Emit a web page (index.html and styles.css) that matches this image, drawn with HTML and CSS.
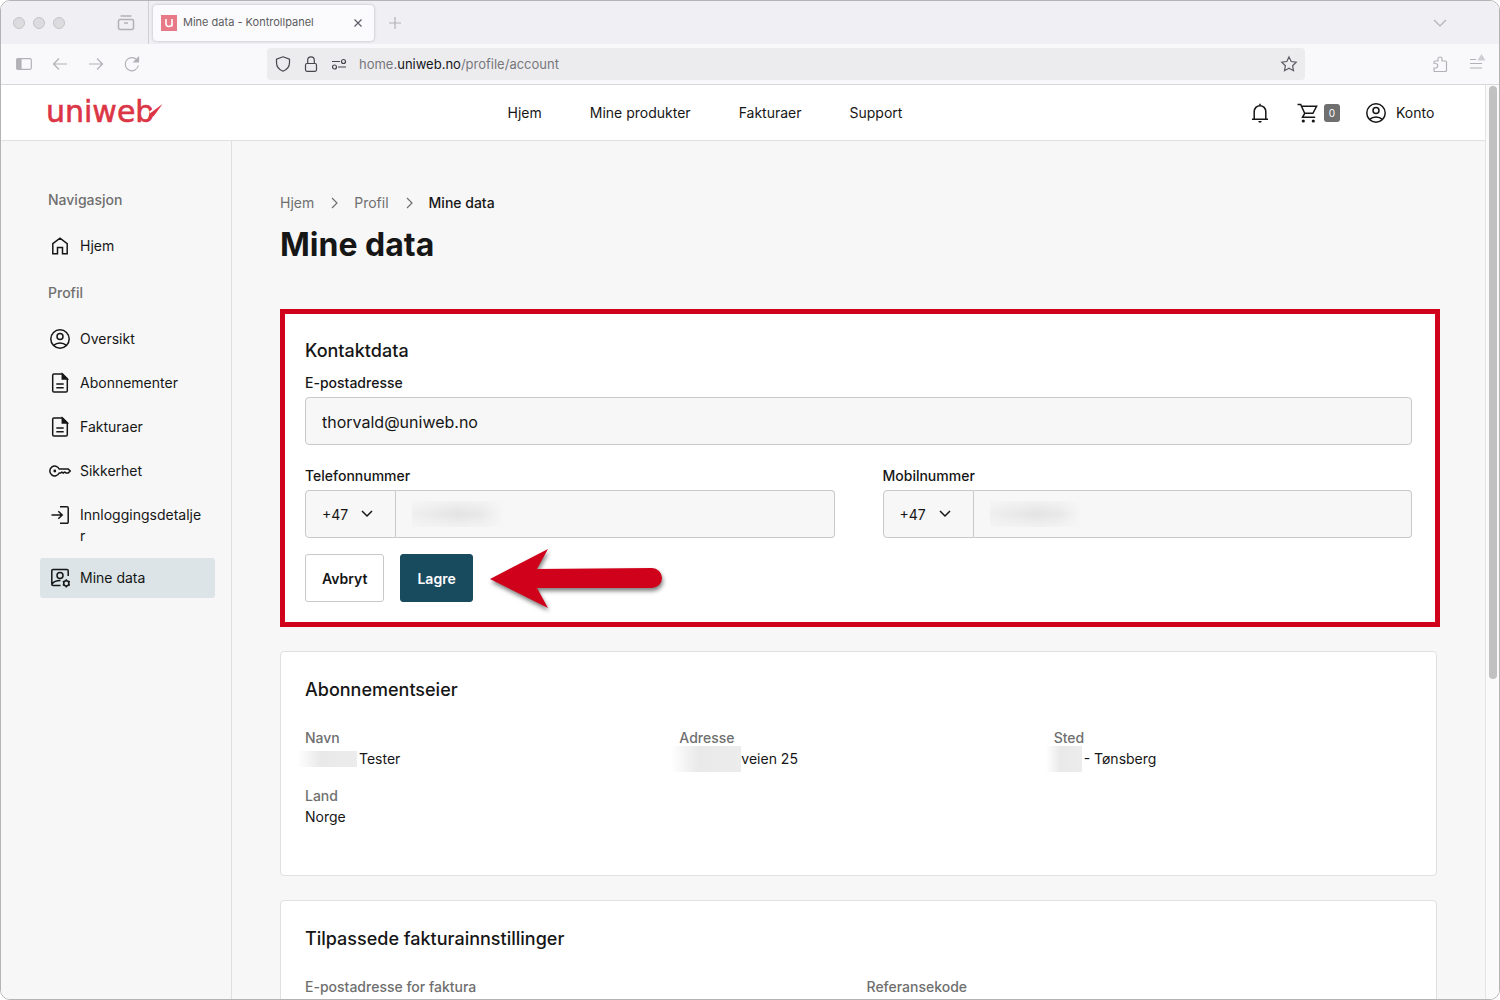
FILE: index.html
```
<!DOCTYPE html>
<html lang="no">
<head>
<meta charset="UTF-8">
<meta name="viewport" content="width=device-width, initial-scale=1.0">
<title>Mine data - Kontrollpanel</title>
<link rel="stylesheet" href="styles.css">
</head>
<body>

<!-- shared icons -->
<svg class="sprite" aria-hidden="true">
    <symbol id="i-user" viewBox="0 0 24 24">
        <circle cx="12" cy="12" r="9.2"/>
        <circle cx="12" cy="9.5" r="3"/>
        <path d="M5.6 18.4c1.7-1.5 3.9-2.4 6.4-2.4s4.7.9 6.4 2.4"/>
    </symbol>
    <symbol id="i-doc" viewBox="0 0 24 24">
        <path d="M14.5 3H6a1.3 1.3 0 0 0-1.3 1.3v15.4A1.3 1.3 0 0 0 6 21h12a1.3 1.3 0 0 0 1.3-1.3V7.8z"/>
        <path d="M14.3 3v5h5z" fill="currentColor"/>
        <path d="M8.3 13h7.4M8.3 16.7h7.4"/>
    </symbol>
    <symbol id="i-right" viewBox="0 0 16 16">
        <path d="M6 3l5 5-5 5"/>
    </symbol>
</svg>

<div class="window">

    <div class="tabstrip">
        <div class="lights"><span></span><span></span><span></span></div>
        <button class="chrome-btn" aria-label="Nylige">
            <svg class="icon chrome-icon" viewBox="0 0 18 18"><path d="M3.5 2h11M1.5 7a1.5 1.5 0 0 1 1.5-1.5h12A1.5 1.5 0 0 1 16.5 7v7a1.5 1.5 0 0 1-1.5 1.5H3A1.5 1.5 0 0 1 1.5 14zM7 9h4"/></svg>
        </button>
        <div class="tab">
            <svg class="favicon" viewBox="0 0 16 16"><rect width="16" height="16" fill="#e77a86"/><path d="M5 4v4.5a3 3 0 0 0 6 0V4M11 4v7.5" fill="none" stroke="#fff" stroke-width="1.6"/></svg>
            <span class="tab-title">Mine data - Kontrollpanel</span>
            <button class="chrome-btn dark" aria-label="Lukk fane">
                <svg class="icon close-icon" viewBox="0 0 10 10"><path d="M1.5 1.5l7 7M8.5 1.5l-7 7"/></svg>
            </button>
        </div>
        <button class="chrome-btn" aria-label="Ny fane">
            <svg class="icon plus-icon" viewBox="0 0 12 12"><path d="M6 0v12M0 6h12"/></svg>
        </button>
        <button class="chrome-btn tab-list" aria-label="Vis faner">
            <svg class="icon plus-icon" viewBox="0 0 12 12"><path d="M0 3l6 6 6-6"/></svg>
        </button>
    </div>

    <div class="toolbar">
        <div class="toolbar-left">
            <button class="chrome-btn" aria-label="Sidepanel">
                <svg class="icon tool-icon" viewBox="0 0 16 16"><rect x=".7" y="2.7" width="14.6" height="10.6" rx="1.5"/><path d="M1 3h4v10H1z" fill="currentColor"/></svg>
            </button>
            <button class="chrome-btn" aria-label="Tilbake">
                <svg class="icon tool-icon" viewBox="0 0 16 16"><path d="M15 8H1.5M7 2.5L1.5 8 7 13.5"/></svg>
            </button>
            <button class="chrome-btn" aria-label="Frem">
                <svg class="icon tool-icon" viewBox="0 0 16 16"><path d="M1 8h13.5M9 2.5L14.5 8 9 13.5"/></svg>
            </button>
            <button class="chrome-btn" aria-label="Last inn">
                <svg class="icon tool-icon" viewBox="0 0 16 16"><path d="M14.3 9.5A6.6 6.6 0 1 1 12.5 3.5"/><path d="M14.5 1.5v4.5H10z" fill="currentColor"/></svg>
            </button>
        </div>
        <div class="urlbar">
            <svg class="icon tool-icon" viewBox="0 0 16 16"><path d="M8 .8l6.5 2.4v3.3c0 4-2.6 7.200-6.5 8.700-3.900-1.500-6.500-4.700-6.500-8.700V3.200z"/></svg>
            <svg class="icon tool-icon" viewBox="0 0 16 16"><rect x="2.5" y="7.5" width="11" height="7.8" rx="1.5"/><path d="M4.7 7.500V4.200a3.300 3.300 0 0 1 6.600 0v3.300"/></svg>
            <svg class="icon tool-icon" viewBox="0 0 16 16"><path d="M1 5.5h8M7 11h8"/><circle cx="12.5" cy="5.5" r="2"/><circle cx="3.5" cy="11" r="2"/></svg>
            <span class="url">home.<b>uniweb.no</b>/profile/account</span>
            <button class="chrome-btn dark" aria-label="Bokmerk">
                <svg class="icon tool-icon" viewBox="0 0 16 16"><path d="M8 .9l2.2 4.6 5 .7-3.6 3.5.9 5L8 12.3l-4.500 2.400.9-5L.8 6.200l5-.7z"/></svg>
            </button>
        </div>
        <div class="toolbar-right">
            <button class="chrome-btn" aria-label="Utvidelser">
                <svg class="icon tool-icon" viewBox="0 0 16 16"><path d="M1 7.300V6a1 1 0 0 1 1-1h3V3a2 2 0 0 1 4 0v2h3.500a1 1 0 0 1 1 1V14.500a1 1 0 0 1-1 1H2a1 1 0 0 1-1-1V12h1.500a1.800 1.800 0 0 0 0-4.500z"/></svg>
            </button>
            <button class="chrome-btn" aria-label="Meny">
                <svg class="icon tool-icon" viewBox="0 0 16 16"><path d="M1 3.500h6M1 7.500h12M1 12h12"/><path d="M12.500-2l4 6.500h-8z" fill="#cfcfd3" stroke="none"/></svg>
            </button>
        </div>
    </div>

    <div class="viewport">
    <div class="page">

        <header class="header">
            <a href="#" class="logo" aria-label="uniweb">
                <svg viewBox="0 0 114 26">
                    <text x="-2" y="22">uniweb</text>
                    <path d="M103 14l14-11" stroke="#fff" stroke-width="6"/>
                    <path d="M100.500 18c0-3 1.300-5 3.700-6.300L114.500 4l-7 9.800c-1.500 2.700-3.700 4.200-7 4.200z" fill="#dc3545"/>
                </svg>
            </a>
            <nav class="topnav">
                <a href="#">Hjem</a>
                <a href="#">Mine produkter</a>
                <a href="#">Fakturaer</a>
                <a href="#">Support</a>
            </nav>
            <div class="account">
                <a href="#" aria-label="Varsler">
                    <svg class="icon" viewBox="0 0 24 24"><path d="M4 18.200h16M6.200 18V10.500a5.800 5.800 0 0 1 11.600 0V18M12 4.500V2.700"/><path d="M10.300 20h3.400a1.700 1.700 0 0 1-3.400 0z" fill="currentColor" stroke="none"/></svg>
                </a>
                <a href="#" class="cart" aria-label="Handlekurv">
                    <svg class="icon" viewBox="0 0 24 24"><path d="M1.500 3.500h3.200l4 8.800h8.200l3.700-7H5.500M8.700 12.300L6.500 16.300h12.700"/><circle cx="7.300" cy="20" r="1.600" fill="currentColor" stroke="none"/><circle cx="17.300" cy="20" r="1.600" fill="currentColor" stroke="none"/></svg>
                    <span class="badge">0</span>
                </a>
                <a href="#" class="konto">
                    <svg class="icon"><use href="#i-user"/></svg>
                    Konto
                </a>
            </div>
        </header>

        <div class="content">
            <aside class="sidebar">
                <h2>Navigasjon</h2>
                <ul>
                    <li><a href="#">
                        <svg class="icon" viewBox="0 0 24 24"><path d="M4.800 9.700L12 4.200l7.200 5.500v10h-4.700V13.500h-5v6.200H4.800z"/></svg>
                        <span>Hjem</span></a></li>
                </ul>
                <h2>Profil</h2>
                <ul>
                    <li><a href="#"><svg class="icon"><use href="#i-user"/></svg><span>Oversikt</span></a></li>
                    <li><a href="#"><svg class="icon"><use href="#i-doc"/></svg><span>Abonnementer</span></a></li>
                    <li><a href="#"><svg class="icon"><use href="#i-doc"/></svg><span>Fakturaer</span></a></li>
                    <li><a href="#">
                        <svg class="icon" viewBox="0 0 24 24"><path d="M11.200 10a4.900 4.900 0 1 0 0 4h1.300l1.300-.9 1.400.9 1.500-.9 1.500.9h2l2-2-2-2z"/><circle cx="6.800" cy="12" r="1.400" fill="currentColor" stroke="none"/></svg>
                        <span>Sikkerhet</span></a></li>
                    <li><a href="#">
                        <svg class="icon" viewBox="0 0 24 24"><path d="M12 3.700h7a1.200 1.200 0 0 1 1.200 1.200v14.200a1.200 1.200 0 0 1-1.200 1.200h-7M3.500 12h10.500M10.300 8.200l3.900 3.800-3.900 3.800"/></svg>
                        <span>Innloggingsdetaljer</span></a></li>
                    <li><a href="#" class="active">
                        <svg class="icon" viewBox="0 0 24 24"><path d="M20.200 10V4.800a1.300 1.300 0 0 0-1.300-1.300H5.100a1.300 1.300 0 0 0-1.300 1.300v13.400a1.300 1.300 0 0 0 1.300 1.300h7.400M4 18c1.800-2.300 4.700-3.500 8.500-3.400"/><circle cx="12" cy="9.500" r="3"/><circle cx="18.300" cy="17.300" r="2.600"/><path d="M18.300 13.200v1.500M18.300 19.900v1.500M14.800 15.300l1.300.7M20.500 18.600l1.300.7M14.800 19.300l1.300-.7M20.500 16l1.300-.7"/></svg>
                        <span>Mine data</span></a></li>
                </ul>
            </aside>

            <main class="main">
                <nav class="breadcrumb">
                    <a href="#">Hjem</a>
                    <svg class="icon crumb-icon"><use href="#i-right"/></svg>
                    <a href="#">Profil</a>
                    <svg class="icon crumb-icon"><use href="#i-right"/></svg>
                    <span>Mine data</span>
                </nav>
                <h1>Mine data</h1>

                <form class="card marked">
                    <h3>Kontaktdata</h3>
                    <label for="email">E-postadresse</label>
                    <input type="email" id="email" value="thorvald@uniweb.no">
                    <div class="phones">
                        <div>
                            <label for="phone">Telefonnummer</label>
                            <div class="phone">
                                <select aria-label="Landskode telefon"><option>+47</option></select>
                                <input type="tel" id="phone" class="hidden-number">
                            </div>
                        </div>
                        <div>
                            <label for="mobile">Mobilnummer</label>
                            <div class="phone">
                                <select aria-label="Landskode mobil"><option>+47</option></select>
                                <input type="tel" id="mobile" class="hidden-number">
                            </div>
                        </div>
                    </div>
                    <div class="actions">
                        <button type="button" class="btn">Avbryt</button>
                        <button type="button" class="btn primary">Lagre</button>
                        <svg class="arrow" viewBox="0 0 180 68"><path d="M0 30L58 0 47 20 162 19a10 10 0 0 1 0 20L47 39 58 59z"/></svg>
                    </div>
                </form>

                <section class="card">
                    <h3>Abonnementseier</h3>
                    <dl class="info three">
                        <div><dt>Navn</dt><dd><span class="redacted name"></span>Tester</dd></div>
                        <div><dt>Adresse</dt><dd><span class="redacted street"></span>veien 25</dd></div>
                        <div><dt>Sted</dt><dd><span class="redacted zip"></span>- Tønsberg</dd></div>
                        <div><dt>Land</dt><dd>Norge</dd></div>
                    </dl>
                </section>

                <section class="card">
                    <h3>Tilpassede fakturainnstillinger</h3>
                    <dl class="info two">
                        <div><dt>E-postadresse for faktura</dt><dd></dd></div>
                        <div><dt>Referansekode</dt><dd></dd></div>
                    </dl>
                </section>
            </main>
        </div>
    </div>
    <div class="scrollbar"><div class="thumb"></div></div>
    </div>
</div>

</body>
</html>
```
FILE: styles.css
```
* {
    box-sizing: border-box;
}

body {
    margin: 0;
    font-family: Inter, "Liberation Sans", sans-serif;
    font-size: 14px;
    line-height: 21px;
    color: #161616;
    background-color: #fff;
}

a {
    color: inherit;
    text-decoration: none;
}

h1, h2, h3, ul, dl, dd {
    margin: 0;
    padding: 0;
}

button, input, select {
    font-family: inherit;
    color: inherit;
}

.sprite {
    display: none;
}

.icon {
    display: block;
    flex-shrink: 0;
    width: 24px;
    height: 24px;
    fill: none;
    stroke: currentColor;
    stroke-width: 1.5;
    overflow: visible;
}

/* browser window */
.window {
    display: flex;
    flex-direction: column;
    height: 100vh;
    border: 1px solid #b4b3b6;
    border-radius: 10px;
    overflow: hidden;
}

.tabstrip {
    display: flex;
    align-items: center;
    flex-shrink: 0;
    height: 43px;
    padding-left: 12px;
    background-color: #f0eff4;
}

.lights {
    display: flex;
    gap: 8px;
    margin-right: 52px;
}

.lights span {
    width: 12px;
    height: 12px;
    border: 1px solid #c4c3c6;
    border-radius: 50%;
    background-color: #dcdbdd;
}

.chrome-btn {
    padding: 0;
    border: none;
    background: none;
    color: #b2b1b6;
}

.chrome-btn.dark {
    color: #5b5b66;
}

.chrome-icon {
    width: 18px;
    height: 18px;
}

.tab {
    display: flex;
    align-items: center;
    gap: 6px;
    width: 221px;
    height: 36px;
    margin: 0 15px 0 18px;
    padding: 0 11px 0 8px;
    border-radius: 4px;
    background-color: #fbfbfd;
    box-shadow: 0 0 3px rgba(0, 0, 0, 0.25);
    position: relative;
}

/* line between the window buttons and the first tab */
.tab::before {
    content: "";
    position: absolute;
    left: -5px;
    top: -4px;
    width: 1px;
    height: 43px;
    background-color: #cfced3;
}

.favicon {
    width: 16px;
    height: 16px;
}

.tab-title {
    flex: 1;
    font-size: 11px;
    color: #5b5b60;
    white-space: nowrap;
}

.close-icon {
    width: 10px;
    height: 10px;
    stroke-width: 1.2;
}

.plus-icon {
    width: 12px;
    height: 12px;
    stroke-width: 1.2;
}

.tab-list {
    margin-left: auto;
    margin-right: 53px;
}

.toolbar {
    display: flex;
    align-items: center;
    flex-shrink: 0;
    height: 41px;
    background-color: #f9f9fb;
    border-bottom: 1px solid #d8d7dc;
}

.toolbar-left, .toolbar-right {
    display: flex;
    gap: 20px;
}

.toolbar-left {
    width: 266px;
    padding-left: 15px;
}

.toolbar-right {
    width: 194px;
    justify-content: flex-end;
    padding-right: 14px;
}

.tool-icon {
    width: 16px;
    height: 16px;
    stroke-width: 1.2;
}

.urlbar {
    display: flex;
    align-items: center;
    flex: 1;
    gap: 12px;
    height: 32px;
    padding: 0 8px;
    border-radius: 4px;
    background-color: #ececee;
    color: #46464c;
}

.url {
    flex: 1;
    font-size: 13px;
    color: #77777c;
}

.url b {
    font-weight: 400;
    color: #15141a;
}

.viewport {
    display: flex;
    flex: 1;
    min-height: 0;
}

.scrollbar {
    width: 14px;
    padding: 1px 2px 0 3px;
    border-left: 1px solid #e4e4e4;
    background-color: #fafafa;
}

.thumb {
    height: 65%;
    border-radius: 4px;
    background-color: #c1c1c1;
}

/* page */
.page {
    display: flex;
    flex-direction: column;
    flex: 1;
    overflow: hidden;
    background-color: #f7f7f7;
}

.header {
    display: flex;
    align-items: center;
    justify-content: space-between;
    flex-shrink: 0;
    height: 56px;
    padding: 0 48px 0 47px;
    background-color: #fff;
    border-bottom: 1px solid #e0e0e0;
}

.logo svg {
    display: block;
    width: 114px;
    height: 26px;
    overflow: visible;
}

.logo text {
    font-family: "DejaVu Sans", sans-serif;
    font-size: 30px;
    fill: #dc3545;
    stroke: #dc3545;
    stroke-width: 0.6;
}

.topnav {
    display: flex;
    gap: 48px;
}

.account, .cart, .konto {
    display: flex;
    align-items: center;
}

.account {
    gap: 24px;
}

.cart {
    gap: 4px;
}

.konto {
    gap: 8px;
    min-width: 73px;
}

.badge {
    width: 16px;
    height: 18px;
    border-radius: 3px;
    background-color: #6f6f6f;
    color: #fff;
    font-size: 10px;
    line-height: 18px;
    text-align: center;
}

.content {
    display: flex;
    flex: 1;
    min-height: 0;
}

.sidebar {
    flex-shrink: 0;
    width: 231px;
    padding: 48px 16px 0 39px;
    border-right: 1px solid #e0e0e0;
}

.sidebar h2 {
    margin-bottom: 16px;
    padding-left: 8px;
    font-size: 14px;
    font-weight: 500;
    color: #6f6f6f;
}

.sidebar ul {
    display: flex;
    flex-direction: column;
    gap: 4px;
    margin-bottom: 16px;
    list-style: none;
}

.sidebar a {
    display: flex;
    gap: 8px;
    padding: 8px 10px 8px 8px;
    border-radius: 3px;
}

.sidebar a span {
    flex: 1;
    min-width: 0;
    padding-top: 1px;
    overflow-wrap: anywhere;
}

.sidebar a.active {
    background-color: #dce4e7;
}

.main {
    flex: 1;
    padding: 51px 48px 0 48px;
}

.breadcrumb {
    display: flex;
    align-items: center;
    gap: 12px;
    margin-bottom: 9px;
    color: #6f6f6f;
}

.breadcrumb span {
    color: #161616;
    font-weight: 500;
}

.crumb-icon {
    width: 16px;
    height: 16px;
    stroke-width: 1.2;
}

h1 {
    margin-bottom: 44px;
    font-size: 32px;
    line-height: 46px;
    font-weight: 700;
}

h3 {
    font-size: 18px;
    line-height: 28px;
    font-weight: 500;
}

.card {
    display: block;
    margin-bottom: 24px;
    padding: 24px;
    border: 1px solid #e0e0e0;
    border-radius: 4px;
    background-color: #fff;
    position: relative;
}

/* red frame around the contact form */
.marked::after {
    content: "";
    position: absolute;
    inset: -4px -4px -1px -1px;
    border: 5px solid #d0021b;
    pointer-events: none;
}

.marked h3 {
    margin-bottom: 7px;
}

label {
    display: block;
    margin-bottom: 4px;
    font-weight: 500;
}

input, select {
    display: block;
    width: 100%;
    height: 48px;
    padding: 2px 16px 0;
    border: 1px solid #c9c9c9;
    border-radius: 4px;
    background-color: #f7f7f7;
    font-size: 16px;
}

.phones {
    display: grid;
    grid-template-columns: 1fr 1fr;
    gap: 48px;
    margin: 20px 0 16px;
}

.phone {
    display: flex;
}

.phone select {
    width: 91px;
    flex-shrink: 0;
    padding-top: 0;
    border-radius: 4px 0 0 4px;
    appearance: none;
    font-size: 14px;
    background-image: url("data:image/svg+xml,%3Csvg xmlns='http://www.w3.org/2000/svg' width='12' height='8'%3E%3Cpath d='M1 1l5 5 5-5' fill='none' stroke='%23161616' stroke-width='1.5'/%3E%3C/svg%3E");
    background-repeat: no-repeat;
    background-position: right 22px center;
}

.phone input {
    border-left: none;
    border-radius: 0 4px 4px 0;
}

.hidden-number {
    background-image: linear-gradient(to bottom, rgba(247, 247, 247, 0.7), rgba(247, 247, 247, 0) 50%, rgba(247, 247, 247, 0.7)), linear-gradient(to right, #efefef, #e3e3e3 50%, #e8e8e8 75%, #f7f7f7);
    background-repeat: no-repeat;
    background-size: 92px 26px;
    background-position: 16px center;
}

.actions {
    display: flex;
    gap: 16px;
    position: relative;
}

.btn {
    height: 48px;
    padding: 0 16px;
    border: 1px solid #c9c9c9;
    border-radius: 3px;
    background-color: #fff;
    font-size: 14px;
    font-weight: 600;
}

.btn.primary {
    border-color: #194b5f;
    background-color: #194b5f;
    color: #fff;
}

.arrow {
    position: absolute;
    left: 185px;
    top: -5px;
    width: 180px;
    height: 68px;
    fill: #d0021b;
    filter: drop-shadow(1px 3px 2px rgba(0, 0, 0, 0.5));
}

.info {
    display: grid;
    gap: 16px;
    margin: 23px 0 24px;
}

.info.three {
    grid-template-columns: 1fr 1fr 1fr;
}

.info.two {
    grid-template-columns: 1fr 1fr;
}

.info dt {
    font-weight: 500;
    color: #6f6f6f;
}

.info dd {
    display: flex;
    align-items: center;
    height: 21px;
}

.redacted {
    flex-shrink: 0;
    background-image: linear-gradient(to right, #fff, #e9e9e9 40%, #ececec);
}

.redacted.name {
    width: 60px;
    height: 16px;
    margin: 0 2px 0 -8px;
}

.redacted.street {
    width: 70px;
    height: 26px;
    margin-left: -8px;
}

.redacted.zip {
    width: 36px;
    height: 26px;
    margin: 0 2px 0 -8px;
}
```
